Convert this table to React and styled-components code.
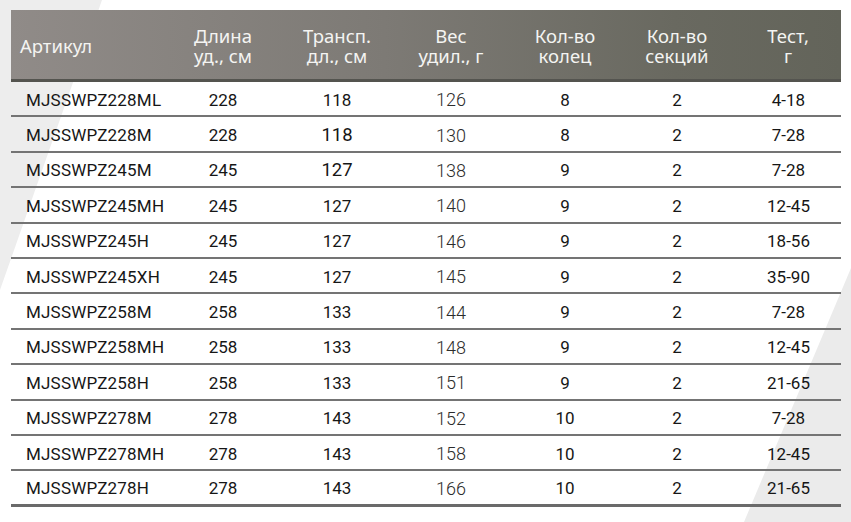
import React from "react";
import styled, { createGlobalStyle } from "styled-components";

const GlobalStyle = createGlobalStyle`
  html, body { margin: 0; padding: 0; background: #ffffff; }
  body { width: 851px; height: 522px; overflow: hidden; }
`;

const Page = styled.div`
  position: relative;
  width: 851px;
  height: 522px;
  padding: 10px 10px 0 11px;
  box-sizing: border-box;
  background: #ffffff;
  overflow: hidden;

  &::before,
  &::after {
    content: "";
    position: absolute;
    inset: 0;
    z-index: 0;
  }
  &::before {
    background: #ededed;
    clip-path: polygon(0 0, 102px 0, 0 290px);
  }
  &::after {
    background: #ebebeb;
    clip-path: polygon(851px 268px, 851px 522px, 744px 522px);
  }
`;

const Table = styled.div`
  position: relative;
  z-index: 1;
  width: 830px;
  display: grid;
  grid-template-columns: 156px 112px 116px 112px 116px 108px 110px;
`;

const HeaderRow = styled.div`
  display: contents;
`;

const HeadCell = styled.div`
  height: 67px;
  border-bottom: 3px solid #54544f;
  background: linear-gradient(90deg, #908b88 0%, #7d7a75 45%, #696960 80%, #63645a 100%);
  background-size: 830px 100%;
  background-position: ${(p) => -p.$offset}px 0;
  display: flex;
  align-items: center;
  justify-content: ${(p) => (p.$left ? "flex-start" : "center")};
  padding-left: ${(p) => (p.$left ? "9px" : p.$last ? "4px" : "0")};
  padding-top: 2px;
  box-sizing: content-box;
  font-family: "Noto Sans", "Open Sans", sans-serif;
  font-size: 18.5px;
  line-height: 20px;
  color: #f4f4f2;
  text-align: center;
  white-space: pre-line;
`;

const Cell = styled.div`
  height: ${(p) => (p.$lastRow ? "30.4px" : "31.4px")};
  border-bottom: ${(p) => (p.$lastRow ? "3px solid #6a6a6a" : "2px solid #747474")};
  display: flex;
  align-items: center;
  justify-content: ${(p) => (p.$left ? "flex-start" : "center")};
  padding-left: ${(p) => (p.$left ? "15px" : p.$last ? "5px" : "0")};
  padding-top: 2px;
  box-sizing: content-box;
  font-family: Roboto, "Liberation Sans", sans-serif;
  font-size: ${(p) => (p.$big ? "18.5px" : p.$light ? "18px" : "17px")};
  font-weight: ${(p) => (p.$light ? 300 : 400)};
  color: ${(p) => (p.$light ? "#2c2c2c" : "#161616")};
  letter-spacing: ${(p) => (p.$left ? "0.2px" : "0")};
`;

const headers = [
  "Артикул",
  "Длина\nуд., см",
  "Трансп.\nдл., см",
  "Вес\nудил., г",
  "Кол-во\nколец",
  "Кол-во\nсекций",
  "Тест,\nг",
];

const widths = [156, 112, 116, 112, 116, 108, 110];
const offsets = widths.map((_, i) => widths.slice(0, i).reduce((a, b) => a + b, 0));

const rows = [
  ["MJSSWPZ228ML", "228", "118", "126", "8", "2", "4-18"],
  ["MJSSWPZ228M", "228", "118", "130", "8", "2", "7-28"],
  ["MJSSWPZ245M", "245", "127", "138", "9", "2", "7-28"],
  ["MJSSWPZ245MH", "245", "127", "140", "9", "2", "12-45"],
  ["MJSSWPZ245H", "245", "127", "146", "9", "2", "18-56"],
  ["MJSSWPZ245XH", "245", "127", "145", "9", "2", "35-90"],
  ["MJSSWPZ258M", "258", "133", "144", "9", "2", "7-28"],
  ["MJSSWPZ258MH", "258", "133", "148", "9", "2", "12-45"],
  ["MJSSWPZ258H", "258", "133", "151", "9", "2", "21-65"],
  ["MJSSWPZ278M", "278", "143", "152", "10", "2", "7-28"],
  ["MJSSWPZ278MH", "278", "143", "158", "10", "2", "12-45"],
  ["MJSSWPZ278H", "278", "143", "166", "10", "2", "21-65"],
];

export default function App() {
  return (
    <>
      <GlobalStyle />
      <Page>
        <Table>
          <HeaderRow>
            {headers.map((h, i) => (
              <HeadCell key={h} $left={i === 0} $last={i === 6} $offset={offsets[i]}>
                {h}
              </HeadCell>
            ))}
          </HeaderRow>
          {rows.map((r, ri) =>
            r.map((v, ci) => (
              <Cell
                key={`${ri}-${ci}`}
                $left={ci === 0}
                $last={ci === 6}
                $light={ci === 3}
                $big={ci === 2 && (ri === 1 || ri === 2)}
                $lastRow={ri === rows.length - 1}
              >
                {v}
              </Cell>
            ))
          )}
        </Table>
      </Page>
    </>
  );
}
